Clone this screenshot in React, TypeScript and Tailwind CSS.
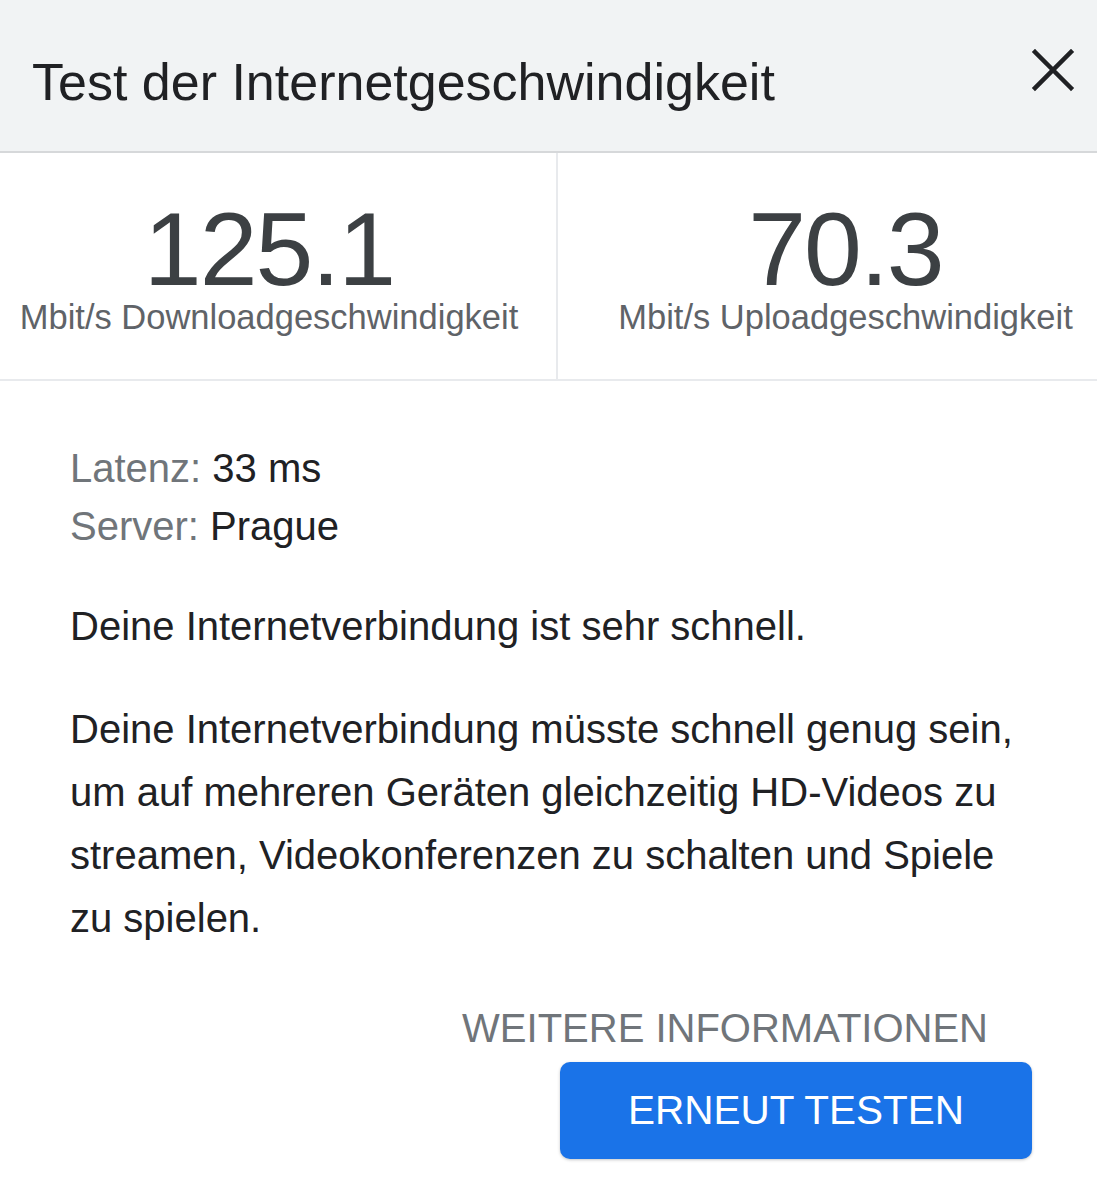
import React from "react";

export default function App() {
  return (
    <div
      className="w-[1097px] h-[1200px] bg-white overflow-hidden"
      style={{ fontFamily: '"Liberation Sans", Arial, sans-serif' }}
    >
      <div className="h-[153px] bg-[#f1f3f4] border-b-2 border-[#d6d8da] flex items-center justify-between pl-[32px] pr-[22px]">
        <h1 className="text-[52px] leading-[60px] text-[#202124] mt-[12px]">Test der Internetgeschwindigkeit</h1>
        <svg width="44" height="44" viewBox="0 0 44 44" className="mb-[12px]">
          <path d="M4 4 L40 40 M40 4 L4 40" stroke="#202124" strokeWidth="4.5" strokeLinecap="square" />
        </svg>
      </div>
      <div className="grid grid-cols-[558px_1fr] h-[228px] border-b-2 border-[#e8eaed]">
        <div className="border-r-2 border-[#e8eaed] flex flex-col items-center pt-[48px] pr-[18px]">
          <div className="text-[104px] leading-[96px] text-[#3c4043] tracking-[-2px]">125.1</div>
          <div className="text-[34.5px] leading-[40px] text-[#5f6368]">Mbit/s Downloadgeschwindigkeit</div>
        </div>
        <div className="flex flex-col items-center pt-[48px] pl-[36px]">
          <div className="text-[104px] leading-[96px] text-[#3c4043] tracking-[-2px]">70.3</div>
          <div className="text-[34.5px] leading-[40px] text-[#5f6368]">Mbit/s Uploadgeschwindigkeit</div>
        </div>
      </div>
      <div className="pl-[70px] pt-[58px]">
        <div className="text-[40px] leading-[58px]">
          <div>
            <span className="text-[#70757a]">Latenz: </span>
            <span className="text-[#202124]">33 ms</span>
          </div>
          <div>
            <span className="text-[#70757a]">Server: </span>
            <span className="text-[#202124]">Prague</span>
          </div>
        </div>
        <p className="text-[40px] leading-[58px] text-[#202124] mt-[42px]">
          Deine Internetverbindung ist sehr schnell.
        </p>
        <p className="text-[40px] leading-[63px] text-[#202124] mt-[43px] w-[960px]">
          Deine Internetverbindung müsste schnell genug sein, um auf mehreren Geräten gleichzeitig HD-Videos zu streamen, Videokonferenzen zu schalten und Spiele zu spielen.
        </p>
      </div>
      <div className="flex flex-col items-end pr-[65px] mt-[56px]">
        <div className="text-[40px] leading-[44px] text-[#70757a] mr-[44px]">WEITERE INFORMATIONEN</div>
        <button className="mt-[12px] w-[472px] h-[97px] rounded-[10px] bg-[#1a73e8] text-white text-[40.5px] shadow-[0_1px_3px_rgba(60,64,67,0.3)]">
          ERNEUT TESTEN
        </button>
      </div>
    </div>
  );
}
